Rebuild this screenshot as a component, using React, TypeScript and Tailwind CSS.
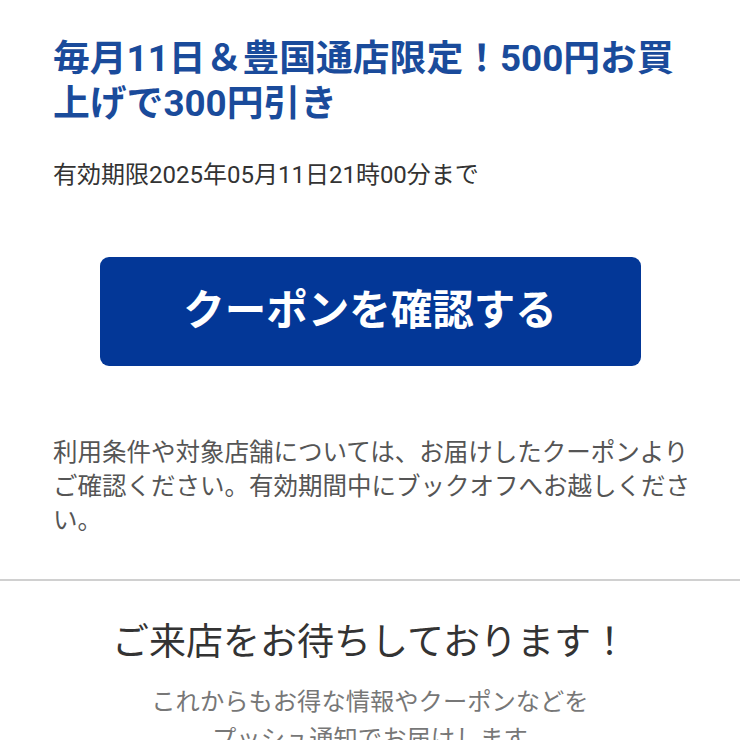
export default function App() {
  return (
    <div className="w-[740px] h-[740px] overflow-hidden bg-white font-['Roboto','Noto_Sans_CJK_JP',sans-serif]">
      <div className="px-[53px] pt-[36px]">
        <h1 className="text-[36.8px] leading-[45px] font-bold text-[#1a4b9b]">
          毎月11日＆豊国通店限定！500円お買上げで300円引き
        </h1>
        <p className="mt-[34px] text-[24px] leading-[30px] text-[#333333]">
          有効期限2025年05月11日21時00分まで
        </p>
        <div className="mt-[67px] flex justify-center">
          <button className="w-[541px] h-[109px] rounded-[9px] bg-[#033797] text-white text-[41.5px] font-bold flex items-center justify-center">
            クーポンを確認する
          </button>
        </div>
        <p className="mt-[70px] w-[645px] text-[24.5px] leading-[34px] text-[#555555]">
          利用条件や対象店舗については、お届けしたクーポンよりご確認ください。有効期間中にブックオフへお越しください。
        </p>
      </div>
      <div className="mt-[41px] h-[2px] bg-[#d0d0d0]" />
      <div className="pt-[38px] flex flex-col items-center text-center">
        <h2 className="text-[37px] leading-[48px] text-[#333333]">ご来店をお待ちしております！</h2>
        <p className="mt-[16px] text-[24.3px] leading-[37px] text-[#777777]">
          これからもお得な情報やクーポンなどを
          <br />
          プッシュ通知でお届けします
        </p>
      </div>
    </div>
  );
}
